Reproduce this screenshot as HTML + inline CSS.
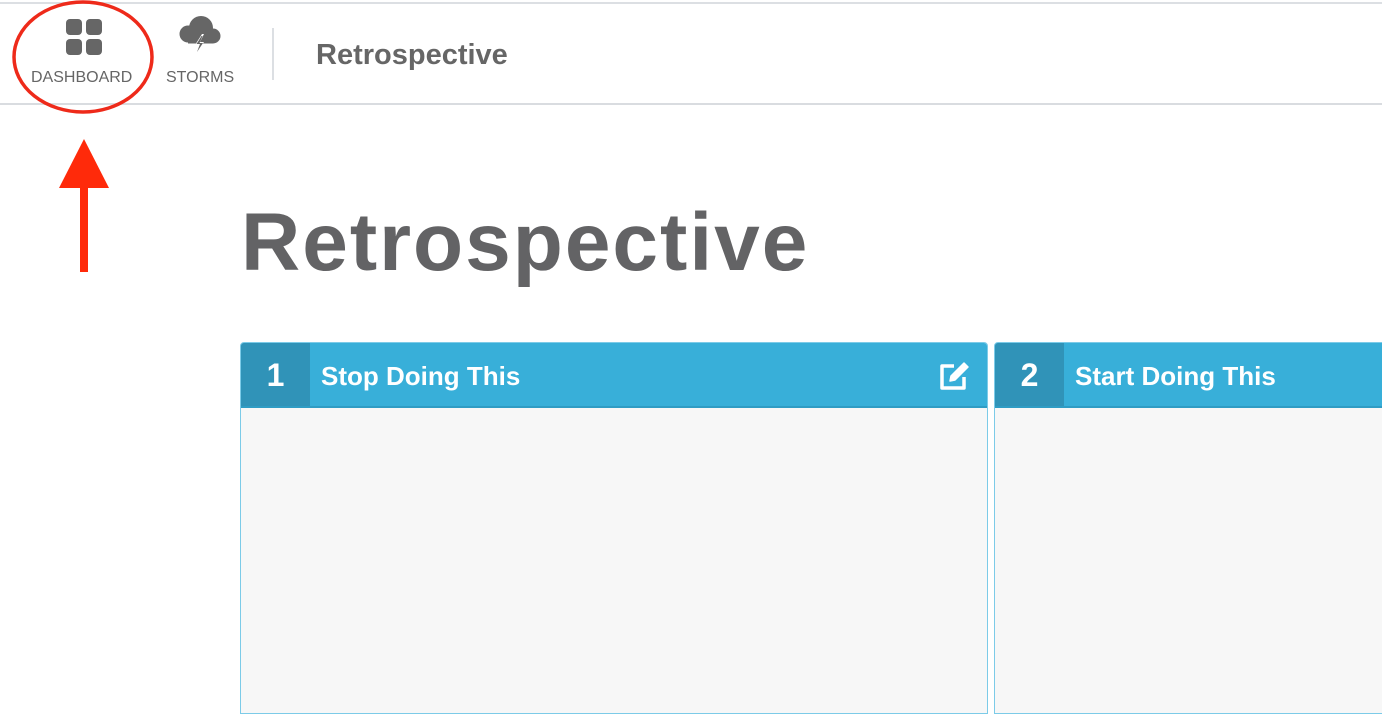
<!DOCTYPE html>
<html><head><style>
body{margin:0;width:1382px;height:700px;overflow:hidden;background:#fff;font-family:"Liberation Sans",sans-serif;position:relative}
.topline{position:absolute;left:0;top:2px;width:1382px;height:2px;background:#dcdfe3}
.hdr{position:absolute;left:0;top:103px;width:1382px;height:2px;background:#d9dce0}
.nav{position:absolute;color:#666;font-size:16px;top:69px}
.sep{position:absolute;left:272px;top:28px;width:2px;height:52px;background:#dcdfe3}
.ttl{position:absolute;left:316px;top:39px;font-size:29px;font-weight:bold;color:#666}
.big{position:absolute;left:241px;top:196px;font-size:82px;font-weight:bold;color:#636365;letter-spacing:2px}
.card{position:absolute;top:342px;height:370px;background:#f7f7f7;border:1px solid #7ccbe8;border-radius:4px 4px 0 0;overflow:hidden}
.ch{height:63px;background:#38afd9;position:relative;border-bottom:2px solid #2f9cc4}
.num{position:absolute;left:0;top:0;padding-top:2px;width:69px;height:61px;line-height:61px;background:#3093b8;color:#fff;font-size:32px;font-weight:bold;text-align:center}
.ct{position:absolute;left:80px;top:2px;line-height:63px;color:#fff;font-size:26px;font-weight:bold}
</style></head><body>
<div class="topline"></div>
<svg style="position:absolute;left:66px;top:19px" width="36" height="36" viewBox="0 0 36 36" fill="#666">
<rect x="0" y="0" width="16" height="16" rx="4"/><rect x="20" y="0" width="16" height="16" rx="4"/>
<rect x="0" y="20" width="16" height="16" rx="4"/><rect x="20" y="20" width="16" height="16" rx="4"/></svg>
<div class="nav" style="left:31px">DASHBOARD</div>
<svg style="position:absolute;left:178px;top:14px" width="44" height="42" viewBox="0 0 44 42">
<circle cx="10" cy="20" r="8.5" fill="#666"/><circle cx="23" cy="14" r="12" fill="#666"/><circle cx="35" cy="22" r="7.5" fill="#666"/>
<rect x="10" y="18" width="25" height="11.5" fill="#666"/>
<path d="M24 20 L17 31 L21 31 L17 41 L26 28 L22 28 L26 20 Z" fill="#fff"/>
<path d="M23.5 22 L18.5 30 L22 30 L19 38 L25 29 L21.5 29 L24.5 22 Z" fill="#666"/></svg>
<div class="nav" style="left:166px">STORMS</div>
<div class="sep"></div>
<div class="ttl">Retrospective</div>
<div class="hdr"></div>
<svg style="position:absolute;left:0;top:0" width="170" height="290">
<ellipse cx="83" cy="57" rx="69" ry="55" fill="none" stroke="#ee2a1a" stroke-width="3.5"/>
<polygon points="84,139 59,188 109,188" fill="#ff2a0a"/>
<rect x="80" y="186" width="8" height="86" fill="#ff2a0a"/></svg>
<div class="big">Retrospective</div>
<div class="card" style="left:240px;width:746px">
<div class="ch"><div class="num">1</div><div class="ct">Stop Doing This</div>
<svg style="position:absolute;left:697px;top:17px" width="34" height="32" viewBox="0 0 34 32" fill="none" stroke="#fff" stroke-width="3.5" stroke-linejoin="round">
<path d="M16 6 H4 V28 H26 V17"/><path d="M12 21 L13 16 L26 3 L30 7 L17 20 Z" fill="#fff" stroke-width="1.5"/></svg></div></div>
<div class="card" style="left:994px;width:400px">
<div class="ch"><div class="num">2</div><div class="ct">Start Doing This</div></div></div>
</body></html>
